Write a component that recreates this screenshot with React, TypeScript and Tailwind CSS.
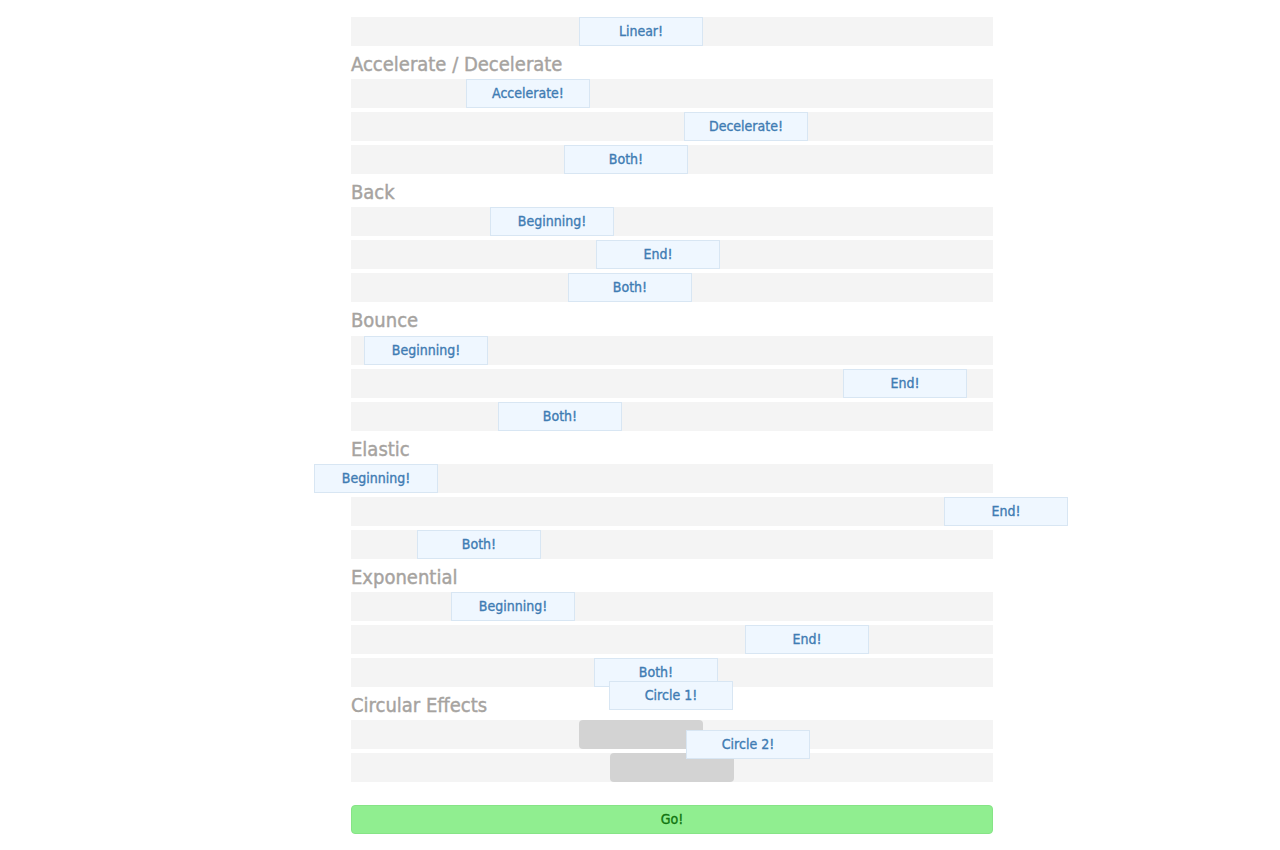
import React from 'react';

type Row = { label: string; left: number };
type Section = { title: string; rows: Row[] };

const sections: Section[] = [
  {
    title: 'Accelerate / Decelerate',
    rows: [
      { label: 'Accelerate!', left: 115 },
      { label: 'Decelerate!', left: 333 },
      { label: 'Both!', left: 213 },
    ],
  },
  {
    title: 'Back',
    rows: [
      { label: 'Beginning!', left: 139 },
      { label: 'End!', left: 245 },
      { label: 'Both!', left: 217 },
    ],
  },
  {
    title: 'Bounce',
    rows: [
      { label: 'Beginning!', left: 13 },
      { label: 'End!', left: 492 },
      { label: 'Both!', left: 147 },
    ],
  },
  {
    title: 'Elastic',
    rows: [
      { label: 'Beginning!', left: -37 },
      { label: 'End!', left: 593 },
      { label: 'Both!', left: 66 },
    ],
  },
  {
    title: 'Exponential',
    rows: [
      { label: 'Beginning!', left: 100 },
      { label: 'End!', left: 394 },
      { label: 'Both!', left: 243 },
    ],
  },
];

const font = { fontFamily: '"DejaVu Sans Condensed", "Liberation Sans Narrow", sans-serif' };

const Box = ({ label, left }: Row) => (
  <div
    className="absolute top-0 h-[29px] w-[124px] flex items-center justify-center bg-[#eff7ff] border border-[#d8e6f3] text-[#3f7cb3] text-[14px] [-webkit-text-stroke:0.35px]"
    style={{ left }}
  >
    {label}
  </div>
);

const Track = ({ children }: { children?: React.ReactNode }) => (
  <div className="relative h-[29px] mb-1 bg-[#f4f4f4]">{children}</div>
);

const Heading = ({ children }: { children: React.ReactNode }) => (
  <h2 className="h-[29.2px] leading-[29px] text-[20px] text-[#a6a3a0] [-webkit-text-stroke:0.4px]">
    {children}
  </h2>
);

const App = () => {
  return (
    <div className="min-h-screen bg-white pt-[17px]" style={font}>
      <div className="ml-[351px] w-[642px] flex flex-col">
        <Track>
          <Box label="Linear!" left={228} />
        </Track>

        {sections.map((s) => (
          <section key={s.title}>
            <Heading>{s.title}</Heading>
            {s.rows.map((r, i) => (
              <Track key={i}>
                <Box {...r} />
              </Track>
            ))}
          </section>
        ))}

        {/* Circular Effects */}
        <section className="relative">
          <Heading>Circular Effects</Heading>
          <Track>
            <div className="absolute left-[228px] top-0 h-[29px] w-[124px] rounded-sm bg-[#d3d3d3]" />
          </Track>
          <Track>
            <div className="absolute left-[259px] top-0 h-[29px] w-[124px] rounded-sm bg-[#d3d3d3]" />
          </Track>
          <div className="absolute left-[258px] top-[-10px] h-[29px] w-[124px] flex items-center justify-center bg-[#eff7ff] border border-[#d8e6f3] text-[#3f7cb3] text-[14px] [-webkit-text-stroke:0.35px]">
            Circle 1!
          </div>
          <div className="absolute left-[335px] top-[39px] h-[29px] w-[124px] flex items-center justify-center bg-[#eff7ff] border border-[#d8e6f3] text-[#3f7cb3] text-[14px] [-webkit-text-stroke:0.35px]">
            Circle 2!
          </div>
        </section>

        <button className="mt-[19px] w-full h-[29px] rounded-sm bg-[#90ee90] border border-[#86e486] text-[#117511] text-[14px] [-webkit-text-stroke:0.35px]">
          Go!
        </button>
      </div>
    </div>
  );
};

export default App;
